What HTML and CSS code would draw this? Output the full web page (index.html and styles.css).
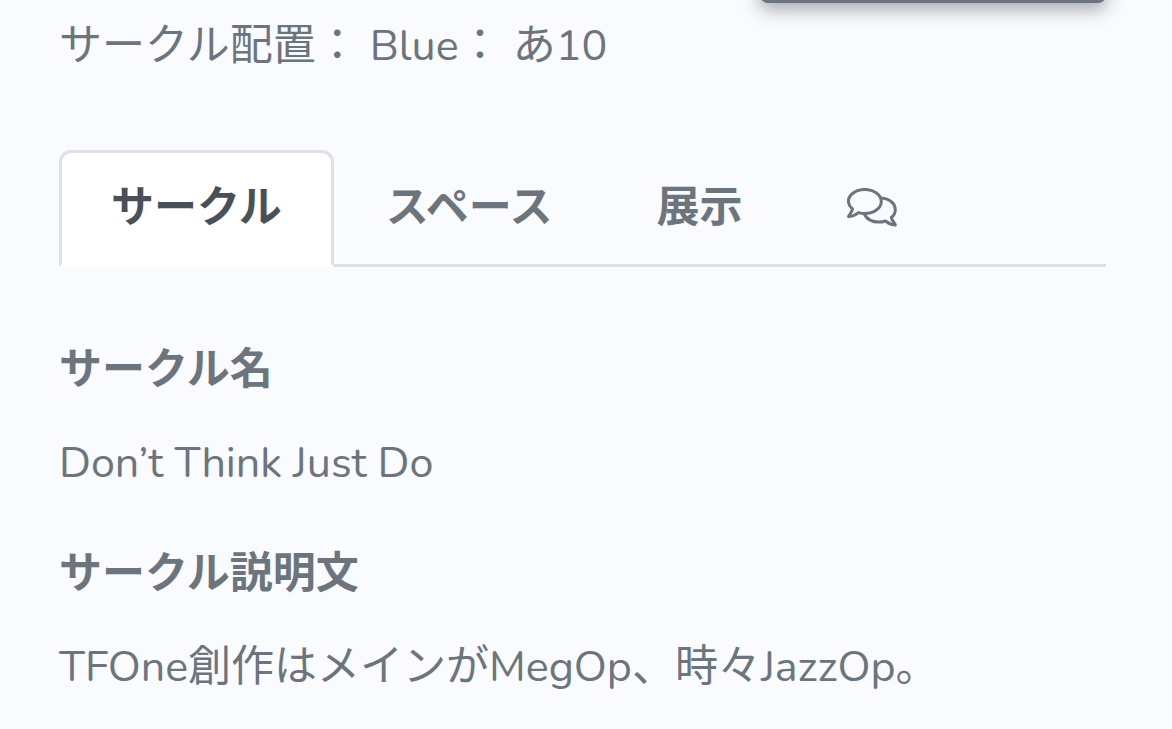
FILE: index.html
```html
<!DOCTYPE html>
<html lang="ja">
<head>
<meta charset="utf-8">
<meta name="viewport" content="width=device-width, initial-scale=1">
<title>サークル</title>
<link rel="stylesheet" href="styles.css">
</head>
<body>
<main class="page">
  <button class="action" type="button" aria-label="操作"></button>
  <p class="placement">サークル配置： Blue： あ10</p>
  <nav class="tabs" role="tablist">
    <button class="tab tab-active" role="tab" aria-selected="true" type="button">サークル</button>
    <button class="tab" role="tab" aria-selected="false" type="button">スペース</button>
    <button class="tab" role="tab" aria-selected="false" type="button">展示</button>
    <button class="tab" role="tab" aria-selected="false" type="button" aria-label="コメント">
      <svg class="icon" viewBox="0 0 50 40" aria-hidden="true">
        <path d="M5.500 21C3 18.800 1.400 16.500 1.400 13.500C1.400 6.800 8.600 1.400 17.700 1.400S34.300 6.800 34.300 13.500S26.800 25.600 17.700 25.600C15.500 25.600 13.500 25.200 11.500 24.600C9 26.500 6 28.600 1.500 28.600C1.300 28 5 24.500 5.500 21Z"/>
        <path d="M34 10C42.500 10.500 48.300 15.500 48.300 22C48.300 25 46.800 27.500 44.300 29.500C44.800 33 48.500 36 48.400 37C44 37 41 35 38.500 33C36.500 33.700 34.500 34.100 32.200 34.100C25 34.100 19.500 30.700 17.200 26"/>
      </svg>
    </button>
  </nav>
  <section class="details">
    <h2>サークル名</h2>
    <p>Don’t Think Just Do</p>
    <h2>サークル説明文</h2>
    <p>TFOne創作はメインがMegOp、時々JazzOp。</p>
  </section>
</main>
</body>
</html>
```
FILE: styles.css
```css
* { box-sizing: border-box; }
body {
  margin: 0;
  background: #fafbfe;
  color: #6c757d;
  font-family: Nunito, "Open Sans", "Noto Sans CJK JP", sans-serif;
  font-size: 43px;
  line-height: 64px;
}
.page {
  display: flow-root;
  padding: 0 66px 0 59px;
}
p, h2 { margin: 0; }
/* The button is scrolled almost out of view; only its lower edge shows. */
.action {
  display: block;
  width: 346px;
  height: 100px;
  margin-top: -97px;
  margin-left: auto;
  padding: 0;
  border: 0;
  border-radius: 8px;
  background: #6c757d;
  box-shadow: 0 6px 18px rgba(73, 80, 87, 0.5);
}
.placement { margin-top: 11px; }
.tabs {
  display: flex;
  margin-top: 72px;
  border-bottom: 3px solid #dee2e6;
}
.tab {
  margin-bottom: -3px;
  padding: 23px 49px 24px;
  border: 3px solid transparent;
  border-radius: 12px 12px 0 0;
  background: transparent;
  color: #6c757d;
  font: inherit;
  font-weight: 700;
}
.tab-active {
  border-color: #dee2e6 #dee2e6 #fff;
  background: #fff;
  color: #495057;
}
.icon {
  display: block;
  width: 50px;
  height: 40px;
  fill: none;
  stroke: currentColor;
  stroke-width: 3;
  stroke-linejoin: round;
  stroke-linecap: round;
}
.details { padding-top: 71px; }
.details h2 { margin-bottom: 29px; font-size: 43px; }
.details p { margin-bottom: 47px; }
```
